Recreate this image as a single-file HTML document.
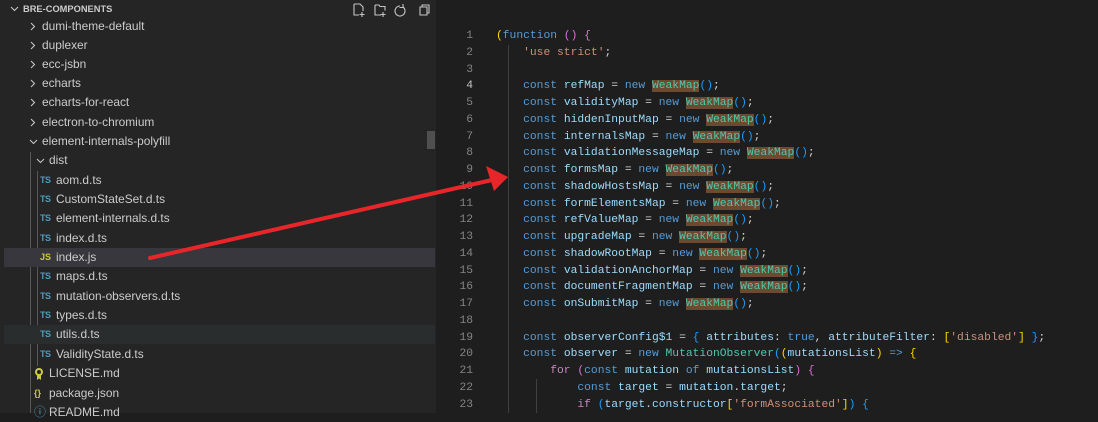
<!DOCTYPE html><html><head><style>
body{margin:0;width:1098px;height:413px;overflow:hidden;background:#1e1e1e;font-family:"Liberation Sans",sans-serif;position:relative}
#side{position:absolute;left:0;top:0;width:436px;height:413px;background:#252526}
.hdr{position:absolute;left:0;top:0;width:436px;height:19px;color:#ccc;font-weight:bold;font-size:9.3px;line-height:19px}
.row{position:absolute;left:4px;width:431px;height:19px;line-height:19px;color:#ccc;font-size:11.9px;white-space:nowrap}
.ch{position:absolute;top:5px}
.ts{position:absolute;color:#519aba;font-weight:bold;font-size:9px;letter-spacing:-.5px}
.js{position:absolute;color:#cbcb41;font-weight:bold;font-size:9px}
.code{position:absolute;left:496px;top:28px;font-family:"Liberation Mono",monospace;font-size:11.3px;line-height:16.75px;color:#9cdcfe;white-space:pre}
.nums{position:absolute;left:440px;width:33px;top:28px;font-family:"Liberation Mono",monospace;font-size:11.3px;line-height:16.75px;color:#858585;text-align:right;white-space:pre}
.k{color:#569cd6}.v{color:#9cdcfe}.f{color:#4ec9b0}.s{color:#ce9178}.p{color:#da70d6}.y{color:#ffd700}.c{color:#c586c0}.d{color:#d4d4d4}.b{color:#179fff}
.w{color:#4ec9b0;background:#6b4a30}
</style></head><body>
<div id="side">
<div class="hdr"><svg style="position:absolute;left:10px;top:6px" width="9" height="6" fill="none" stroke="#c5c5c5" stroke-width="1.1"><path d="M1 1l3.5 3.5L8 1"/></svg><span style="position:absolute;left:23px">BRE-COMPONENTS</span>
<svg style="position:absolute;left:352px;top:3px" width="80" height="14" fill="none" stroke="#c5c5c5" stroke-width="1.1"><path d="M2 1h6l3 3v4M2 1v11h5M10 9v5M7.5 11.5h5"/><path d="M23 2h4l1 1.5h5v4M23 2v10h6M31 9v5M28.5 11.5h5"/><path d="M48 3a5 5 0 1 0 3 1M51 1v3.5h-3.5"/><path d="M68 4h7v8h-7zM70 4v-2h7v8h-2"/></svg></div>
<div style="position:absolute;left:30px;top:152px;width:1px;height:261px;background:#585858"></div>
<div style="position:absolute;left:37px;top:171px;width:1px;height:195px;background:#585858"></div>
<div style="position:absolute;left:427px;top:131px;width:8px;height:18px;background:#4f4f4f"></div>
<div class="row" style="top:17px"><svg class="ch" style="left:26px" width="6" height="9" fill="none" stroke="#c5c5c5" stroke-width="1.1"><path d="M1 1l3.5 3.5L1 8"/></svg><span style="position:absolute;left:38px">dumi-theme-default</span></div>
<div class="row" style="top:36px"><svg class="ch" style="left:26px" width="6" height="9" fill="none" stroke="#c5c5c5" stroke-width="1.1"><path d="M1 1l3.5 3.5L1 8"/></svg><span style="position:absolute;left:38px">duplexer</span></div>
<div class="row" style="top:55px"><svg class="ch" style="left:26px" width="6" height="9" fill="none" stroke="#c5c5c5" stroke-width="1.1"><path d="M1 1l3.5 3.5L1 8"/></svg><span style="position:absolute;left:38px">ecc-jsbn</span></div>
<div class="row" style="top:74px"><svg class="ch" style="left:26px" width="6" height="9" fill="none" stroke="#c5c5c5" stroke-width="1.1"><path d="M1 1l3.5 3.5L1 8"/></svg><span style="position:absolute;left:38px">echarts</span></div>
<div class="row" style="top:93px"><svg class="ch" style="left:26px" width="6" height="9" fill="none" stroke="#c5c5c5" stroke-width="1.1"><path d="M1 1l3.5 3.5L1 8"/></svg><span style="position:absolute;left:38px">echarts-for-react</span></div>
<div class="row" style="top:113px"><svg class="ch" style="left:26px" width="6" height="9" fill="none" stroke="#c5c5c5" stroke-width="1.1"><path d="M1 1l3.5 3.5L1 8"/></svg><span style="position:absolute;left:38px">electron-to-chromium</span></div>
<div class="row" style="top:132px"><svg class="ch" style="left:25px;top:7px" width="9" height="6" fill="none" stroke="#c5c5c5" stroke-width="1.1"><path d="M1 1l3.5 3.5L8 1"/></svg><span style="position:absolute;left:38px">element-internals-polyfill</span></div>
<div class="row" style="top:151px"><svg class="ch" style="left:32px;top:7px" width="9" height="6" fill="none" stroke="#c5c5c5" stroke-width="1.1"><path d="M1 1l3.5 3.5L8 1"/></svg><span style="position:absolute;left:45px">dist</span></div>
<div class="row" style="top:171px"><span class="ts" style="left:36px">TS</span><span style="position:absolute;left:52px">aom.d.ts</span></div>
<div class="row" style="top:190px"><span class="ts" style="left:36px">TS</span><span style="position:absolute;left:52px">CustomStateSet.d.ts</span></div>
<div class="row" style="top:209px"><span class="ts" style="left:36px">TS</span><span style="position:absolute;left:52px">element-internals.d.ts</span></div>
<div class="row" style="top:229px"><span class="ts" style="left:36px">TS</span><span style="position:absolute;left:52px">index.d.ts</span></div>
<div class="row" style="top:248px;background:#37373d"><span class="js" style="left:36px">JS</span><span style="position:absolute;left:52px">index.js</span></div>
<div class="row" style="top:267px"><span class="ts" style="left:36px">TS</span><span style="position:absolute;left:52px">maps.d.ts</span></div>
<div class="row" style="top:287px"><span class="ts" style="left:36px">TS</span><span style="position:absolute;left:52px">mutation-observers.d.ts</span></div>
<div class="row" style="top:306px"><span class="ts" style="left:36px">TS</span><span style="position:absolute;left:52px">types.d.ts</span></div>
<div class="row" style="top:325px;background:#2a2d2e"><span class="ts" style="left:36px">TS</span><span style="position:absolute;left:52px">utils.d.ts</span></div>
<div class="row" style="top:345px"><span class="ts" style="left:36px">TS</span><span style="position:absolute;left:52px">ValidityState.d.ts</span></div>
<div class="row" style="top:364px"><svg style="position:absolute;left:31px;top:4px" width="8" height="12"><circle cx="4" cy="4" r="3" fill="none" stroke="#cbcb41" stroke-width="2"/><path d="M2 7v5l2-1.5 2 1.5V7" fill="#cbcb41"/></svg><span style="position:absolute;left:45px">LICENSE.md</span></div>
<div class="row" style="top:384px"><span class="js" style="left:30px">{}</span><span style="position:absolute;left:45px">package.json</span></div>
<div class="row" style="top:403px"><span style="position:absolute;left:30px;color:#519aba">&#9432;</span><span style="position:absolute;left:45px">README.md</span></div>
</div>
<div style="position:absolute;left:508px;top:45px;width:1px;height:368px;background:#404040"></div>
<div style="position:absolute;left:536px;top:379px;width:1px;height:34px;background:#404040"></div>
<div class="nums">1
2
3
<span style="color:#c6c6c6">4</span>
5
6
7
8
9
10
11
12
13
14
15
16
17
18
19
20
21
22
23</div>
<div class="code"><span class="y">(</span><span class="k">function</span> <span class="p">()</span> <span class="p">{</span>
    <span class="s">'use strict'</span><span class="d">;</span>

    <span class="k">const</span> <span class="v">refMap</span> <span class="d">=</span> <span class="k">new</span> <span class="w">WeakMap</span><span class="b">()</span><span class="d">;</span>
    <span class="k">const</span> <span class="v">validityMap</span> <span class="d">=</span> <span class="k">new</span> <span class="w">WeakMap</span><span class="b">()</span><span class="d">;</span>
    <span class="k">const</span> <span class="v">hiddenInputMap</span> <span class="d">=</span> <span class="k">new</span> <span class="w">WeakMap</span><span class="b">()</span><span class="d">;</span>
    <span class="k">const</span> <span class="v">internalsMap</span> <span class="d">=</span> <span class="k">new</span> <span class="w">WeakMap</span><span class="b">()</span><span class="d">;</span>
    <span class="k">const</span> <span class="v">validationMessageMap</span> <span class="d">=</span> <span class="k">new</span> <span class="w">WeakMap</span><span class="b">()</span><span class="d">;</span>
    <span class="k">const</span> <span class="v">formsMap</span> <span class="d">=</span> <span class="k">new</span> <span class="w">WeakMap</span><span class="b">()</span><span class="d">;</span>
    <span class="k">const</span> <span class="v">shadowHostsMap</span> <span class="d">=</span> <span class="k">new</span> <span class="w">WeakMap</span><span class="b">()</span><span class="d">;</span>
    <span class="k">const</span> <span class="v">formElementsMap</span> <span class="d">=</span> <span class="k">new</span> <span class="w">WeakMap</span><span class="b">()</span><span class="d">;</span>
    <span class="k">const</span> <span class="v">refValueMap</span> <span class="d">=</span> <span class="k">new</span> <span class="w">WeakMap</span><span class="b">()</span><span class="d">;</span>
    <span class="k">const</span> <span class="v">upgradeMap</span> <span class="d">=</span> <span class="k">new</span> <span class="w">WeakMap</span><span class="b">()</span><span class="d">;</span>
    <span class="k">const</span> <span class="v">shadowRootMap</span> <span class="d">=</span> <span class="k">new</span> <span class="w">WeakMap</span><span class="b">()</span><span class="d">;</span>
    <span class="k">const</span> <span class="v">validationAnchorMap</span> <span class="d">=</span> <span class="k">new</span> <span class="w">WeakMap</span><span class="b">()</span><span class="d">;</span>
    <span class="k">const</span> <span class="v">documentFragmentMap</span> <span class="d">=</span> <span class="k">new</span> <span class="w">WeakMap</span><span class="b">()</span><span class="d">;</span>
    <span class="k">const</span> <span class="v">onSubmitMap</span> <span class="d">=</span> <span class="k">new</span> <span class="w">WeakMap</span><span class="b">()</span><span class="d">;</span>

    <span class="k">const</span> <span class="v">observerConfig$1</span> <span class="d">=</span> <span class="b">{</span> <span class="v">attributes</span><span class="d">:</span> <span class="k">true</span><span class="d">,</span> <span class="v">attributeFilter</span><span class="d">:</span> <span class="y">[</span><span class="s">'disabled'</span><span class="y">]</span> <span class="b">}</span><span class="d">;</span>
    <span class="k">const</span> <span class="v">observer</span> <span class="d">=</span> <span class="k">new</span> <span class="f">MutationObserver</span><span class="b">(</span><span class="y">(</span><span class="v">mutationsList</span><span class="y">)</span> <span class="k">=&gt;</span> <span class="y">{</span>
        <span class="c">for</span> <span class="p">(</span><span class="k">const</span> <span class="v">mutation</span> <span class="k">of</span> <span class="v">mutationsList</span><span class="p">)</span> <span class="p">{</span>
            <span class="k">const</span> <span class="v">target</span> <span class="d">=</span> <span class="v">mutation</span><span class="d">.</span><span class="v">target</span><span class="d">;</span>
            <span class="c">if</span> <span class="b">(</span><span class="v">target</span><span class="d">.</span><span class="v">constructor</span><span class="y">[</span><span class="s">'formAssociated'</span><span class="y">]</span><span class="b">)</span> <span class="b">{</span></div>
<svg style="position:absolute;left:0;top:0" width="1098" height="413"><path d="M150 258L492 180" stroke="#e8262a" stroke-width="4" stroke-linecap="round"/><path d="M508 177L486 166L494 191Z" fill="#e8262a"/></svg>
</body></html>
